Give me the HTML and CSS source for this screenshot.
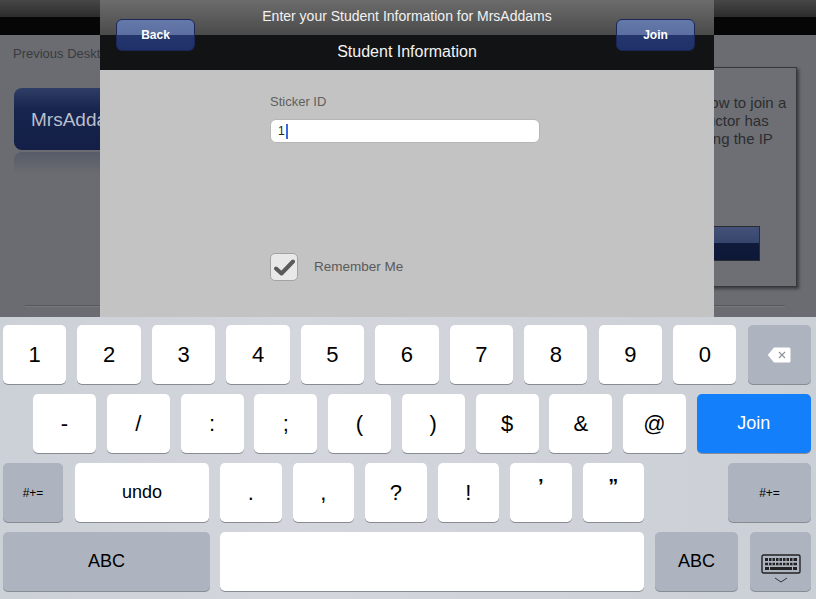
FILE: index.html
```html
<!DOCTYPE html>
<html>
<head>
<meta charset="utf-8">
<link rel="stylesheet" href="styles.css">
</head>
<body>
<div class="app">
  <div class="topbar"></div>
  <div class="navbar"></div>
  <div class="content">
    <div class="main">
      <div class="left">
        <div class="prev-label">Previous Desktops</div>
        <div class="desk-btn">MrsAddams</div>
        <div class="desk-reflect"></div>
      </div>
      <div class="panel">
        <p class="panel-text"><span>how to join a</span><span>ructor has</span><span>sing the IP</span></p>
        <div class="panel-btn">Go</div>
      </div>
    </div>
    <div class="sep"></div>
  </div>
</div>

<div class="modal">
  <div class="m-head1">Enter your Student Information for MrsAddams</div>
  <div class="m-head2">Student Information</div>
  <div class="m-btn m-back">Back</div>
  <div class="m-btn m-join">Join</div>
  <div class="m-body">
    <div class="field-label">Sticker ID</div>
    <div class="input"><span class="typed">1</span><span class="caret"></span></div>
    <div class="remember">
      <div class="checkbox">
        <svg width="21" height="17" viewBox="0 0 21 17"><path d="M2 9.5 L7.5 14.5 L19 2.5" fill="none" stroke="#5a5a5a" stroke-width="4" stroke-linecap="round" stroke-linejoin="round"/></svg>
      </div>
      <span class="remember-text">Remember Me</span>
    </div>
  </div>
</div>

<div class="keyboard">
  <div class="row r1">
    <div class="key">1</div><div class="key">2</div><div class="key">3</div><div class="key">4</div><div class="key">5</div><div class="key">6</div><div class="key">7</div><div class="key">8</div><div class="key">9</div><div class="key">0</div>
    <div class="key gray">
      <svg width="24" height="16" viewBox="0 0 24 16"><path d="M7 0.5 H22 Q23.5 0.5 23.5 2 V14 Q23.5 15.5 22 15.5 H7 L0.8 8 Z" fill="#fff"/><path d="M12 5 L18 11 M18 5 L12 11" stroke="#8e939b" stroke-width="1.2"/></svg>
    </div>
  </div>
  <div class="row r2">
    <div class="key">-</div><div class="key">/</div><div class="key">:</div><div class="key">;</div><div class="key">(</div><div class="key">)</div><div class="key">$</div><div class="key">&amp;</div><div class="key">@</div>
    <div class="key blue">Join</div>
  </div>
  <div class="row r3">
    <div class="key gray small k-sym">#+=</div>
    <div class="key word k-undo">undo</div>
    <div class="key p">.</div><div class="key p">,</div><div class="key p">?</div><div class="key p">!</div><div class="key p q">’</div><div class="key p q">”</div>
    <div class="key gray small k-sym2">#+=</div>
  </div>
  <div class="row r4">
    <div class="key gray word k-abc">ABC</div>
    <div class="key k-space"></div>
    <div class="key gray word k-abc2">ABC</div>
    <div class="key gray k-hide">
      <svg width="40" height="30" viewBox="0 0 40 30">
        <rect x="1" y="1" width="38" height="18" rx="1.5" fill="none" stroke="#222" stroke-width="1.4"/>
        <g fill="#222">
          <rect x="4" y="4" width="32" height="3"/>
          <rect x="4" y="8.5" width="32" height="3"/>
          <rect x="4" y="13" width="32" height="3"/>
        </g>
        <g fill="#adb4bf">
          <rect x="7" y="4" width="1" height="7.5"/><rect x="10.5" y="4" width="1" height="7.5"/><rect x="14" y="4" width="1" height="7.5"/><rect x="17.5" y="4" width="1" height="7.5"/><rect x="21" y="4" width="1" height="7.5"/><rect x="24.5" y="4" width="1" height="7.5"/><rect x="28" y="4" width="1" height="7.5"/><rect x="31.5" y="4" width="1" height="7.5"/>
          <rect x="4" y="7" width="32" height="1.5"/><rect x="4" y="11.5" width="32" height="1.5"/>
          <rect x="8" y="13" width="1" height="3"/><rect x="31" y="13" width="1" height="3"/>
        </g>
        <path d="M14 24 L20 28 L26 24" fill="none" stroke="#333" stroke-width="1"/>
      </svg>
    </div>
  </div>
</div>
</body>
</html>
```

FILE: styles.css
```css
* { box-sizing: border-box; }
html, body { margin: 0; padding: 0; }
body {
  width: 816px;
  height: 599px;
  overflow: hidden;
  position: relative;
  font-family: "Liberation Sans", Arial, sans-serif;
  background: #6a6c71;
}

/* background app */
.app { display: flex; flex-direction: column; height: 599px; }
.topbar { height: 17px; background: linear-gradient(#474747, #2c2c2c); }
.navbar { height: 18px; background: #060606; }
.content { flex: 1; background: #6a6c71; padding: 0 19px 0 14px; }
.main { display: flex; justify-content: space-between; height: 270px; }
.left { width: 180px; padding-top: 11px; }
.prev-label { font-size: 13px; line-height: 16px; color: #3a3b3e; margin-left: -1px; }
.desk-btn {
  margin-top: 26px;
  height: 62px;
  width: 170px;
  border-radius: 8px;
  background: linear-gradient(#2f3e66, #17244d 35%, #131f46);
  color: #b9bfcb;
  font-size: 19px;
  line-height: 64px;
  padding-left: 17px;
}
.desk-reflect {
  height: 22px;
  width: 170px;
  margin-top: 2px;
  border-radius: 8px 8px 0 0;
  background: linear-gradient(rgba(30,40,80,0.25), rgba(30,40,80,0));
}
.panel {
  margin-top: 32px;
  width: 120px;
  height: 220px;
  border: 1px solid #36373a;
  background: #6d6f74;
  box-shadow: 2px 2px 3px rgba(0,0,0,0.45);
  padding: 26px 0 0 24px;
  position: relative;
}
.panel-text { margin: 0; font-size: 15px; line-height: 18px; color: #2c2d30; }
.panel-text span { display: block; white-space: nowrap; }
.panel-btn {
  position: absolute;
  left: -30px;
  top: 158px;
  width: 112px;
  height: 35px;
  border: 1px solid #2b2c30;
  background: linear-gradient(#44527a, #36456a 48%, #101a3b 50%, #0d1736);
  color: #d8dbe3;
  font-weight: bold;
  font-size: 14px;
  line-height: 33px;
  text-align: center;
}
.sep { margin: 0 12px 0 11px; height: 2px; border-top: 1px solid #55575b; border-bottom: 1px solid #77797e; }

/* modal */
.modal {
  position: absolute;
  left: 100px;
  top: 0;
  width: 614px;
  height: 340px;
  display: flex;
  flex-direction: column;
}
.m-head1 {
  height: 35px;
  background: linear-gradient(#6c6c6c, #4a4a4a);
  color: #f2f2f2;
  font-size: 14px;
  line-height: 33px;
  text-align: center;
}
.m-head2 {
  height: 35px;
  background: #121315;
  color: #f4f4f4;
  font-size: 16px;
  line-height: 33px;
  text-align: center;
}
.m-btn {
  position: absolute;
  top: 19px;
  width: 79px;
  height: 32px;
  border-radius: 6px;
  border: 1px solid #1b2756;
  background: linear-gradient(#6478aa, #5b6fa1 50%, #23366d 50%, #1f3168);
  color: #fff;
  font-weight: bold;
  font-size: 12px;
  line-height: 30px;
  text-align: center;
}
.m-back { left: 16px; }
.m-join { left: 516px; }
.m-body { flex: 1; background: #c3c3c3; padding: 24px 0 0 170px; }
.field-label { font-size: 13px; line-height: 16px; color: #5f5f5f; }
.input {
  margin-top: 9px;
  width: 270px;
  height: 24px;
  background: #fff;
  border: 1px solid #b5b5b5;
  border-radius: 6px;
  display: flex;
  align-items: center;
  padding-left: 7px;
}
.typed { font-size: 12px; color: #222; }
.caret { width: 2px; height: 15px; background: #3a68d8; margin-left: 1px; }
.remember { margin-top: 110px; display: flex; align-items: center; gap: 16px; }
.checkbox {
  width: 28px;
  height: 28px;
  border: 1px solid #a3a3a3;
  border-radius: 5px;
  background: #e8e8e8;
  display: flex;
  align-items: center;
  justify-content: center;
}
.remember-text { font-size: 13.5px; color: #5a5a5a; margin-top: -2px; }

/* keyboard */
.keyboard {
  position: absolute;
  left: 0;
  top: 317px;
  width: 816px;
  height: 282px;
  background: linear-gradient(90deg, #ccd0d7, #d3d6dc 35%, #cfd3d9 70%, #cbcfd6);
  padding-top: 8px;
  display: flex;
  flex-direction: column;
  gap: 10px;
}
.row { display: flex; height: 59px; }
.key {
  height: 59px;
  border-radius: 5px;
  background: #fff;
  box-shadow: 0 1px 0 #878b92;
  color: #000;
  font-size: 22px;
  display: flex;
  align-items: center;
  justify-content: center;
  flex: none;
}
.key.gray { background: #adb4bf; }
.key.blue { background: #147ffb; color: #fff; font-size: 18px; }
.key.word { font-size: 18px; }
.key.small { font-size: 12px; }
.r1 { padding: 0 5px 0 3px; gap: 11.4px; }
.r1 .key { flex: 1; }
.r2 { padding: 0 5px 0 33px; gap: 10.75px; }
.r2 .key { width: 63px; }
.r2 .key.blue { flex: 1; width: auto; }
.r3 { padding: 0 5px 0 3px; }
.k-sym { width: 60px; margin-right: 12px; }
.k-undo { width: 134px; margin-right: 11px; }
.r3 .p { width: 61.5px; margin-right: 11px; }
.r3 .q { font-weight: bold; font-size: 20px; padding-bottom: 12px; }
.k-sym2 { width: 83px; margin-left: auto; }
.r4 { padding: 0 5px 0 3px; }
.k-abc { width: 207px; margin-right: 10px; }
.k-space { width: 424px; margin-right: 11px; }
.k-abc2 { width: 83px; margin-right: 12px; }
.k-hide { width: 61px; padding-top: 14px; }
```
